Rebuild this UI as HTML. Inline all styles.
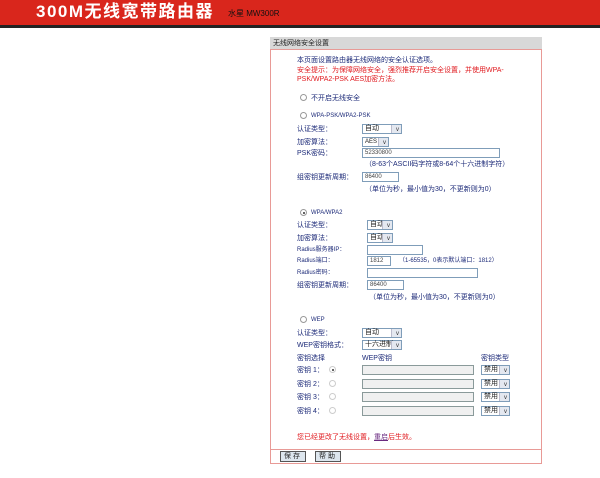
<!DOCTYPE html><html><head><meta charset="utf-8"><style>
*{margin:0;padding:0;box-sizing:border-box}
body{width:600px;height:478px;background:#fff;position:relative;overflow:hidden;font-family:"Liberation Sans","Noto Sans CJK SC",sans-serif;font-size:7px;color:#1c2a78}
.a{position:absolute;white-space:nowrap;line-height:9px}
.in{position:absolute;height:10px;border:1px solid #7f9db9;background:#fff;font-size:6px;line-height:8px;padding-left:2px;color:#444}
.in.g{background:#f0f0f0;border-color:#8a9a9a}
.sel{position:absolute;height:10px;border:1px solid #7f9db9;background:#fff;font-size:7px;line-height:8px;padding-left:2px;color:#222}
.sel:after{content:"";position:absolute;right:0;top:0;width:9px;height:8px;background:#e4e8f0;border-left:1px solid #bbc}
.sel i{position:absolute;right:2px;top:1px;font-style:normal;font-size:6px;z-index:1;color:#333}
.r{position:absolute;width:7px;height:7px;border:1px solid #999;border-radius:50%;background:#fff}
.r.on:after{content:"";position:absolute;left:1.5px;top:1.5px;width:2px;height:2px;border-radius:50%;background:#333}
.r.d{border-color:#ccc}
.red{color:#e0191e}
.btn{position:absolute;top:451px;width:26px;height:11px;border:1px solid #555;background:#dde6ee;font-size:7px;line-height:9px;text-align:center;color:#222;letter-spacing:2px}
</style></head><body>
<div style="position:absolute;left:0;top:0;width:600px;height:25px;background:#d9261c"></div>
<div style="position:absolute;left:0;top:25px;width:600px;height:3px;background:#222"></div>
<div class="a" style="left:36px;top:2px;font-size:17px;line-height:20px;color:#fff;font-weight:bold;letter-spacing:1.5px">300M无线宽带路由器</div>
<div class="a" style="left:228px;top:9px;font-size:8px;color:#111">水星 MW300R</div>

<div style="position:absolute;left:270px;top:37px;width:272px;height:427px;border:1px solid #e89a96;background:#fff"></div>
<div style="position:absolute;left:270px;top:37px;width:272px;height:13px;background:#d8d8d8;border-bottom:1px solid #e89a96"></div>
<div class="a" style="left:273px;top:39px;color:#222">无线网络安全设置</div>
<div style="position:absolute;left:271px;top:449px;width:270px;height:1px;background:#e89a96"></div>

<div class="a" style="left:297px;top:56px">本页面设置路由器无线网络的安全认证选项。</div>
<div class="a red" style="left:297px;top:66px">安全提示：为保障网络安全，强烈推荐开启安全设置，并使用WPA-</div>
<div class="a red" style="left:297px;top:75px">PSK/WPA2-PSK AES加密方法。</div>

<div class="r" style="left:300px;top:94px"></div><div class="a" style="left:311px;top:94px">不开启无线安全</div>
<div class="r" style="left:300px;top:112px"></div><div class="a" style="left:311px;top:112px;font-size:6px">WPA-PSK/WPA2-PSK</div>
<div class="a" style="left:297px;top:125px">认证类型：</div><div class="sel" style="left:362px;top:124px;width:40px">自动<i>v</i></div>
<div class="a" style="left:297px;top:138px">加密算法：</div><div class="sel" style="left:362px;top:137px;width:27px;font-size:6px">AES<i>v</i></div>
<div class="a" style="left:297px;top:149px">PSK密码：</div><div class="in" style="left:362px;top:148px;width:138px">52330800</div>
<div class="a" style="left:365px;top:160px">（8-63个ASCII码字符或8-64个十六进制字符）</div>
<div class="a" style="left:297px;top:173px">组密钥更新周期：</div><div class="in" style="left:362px;top:172px;width:37px">86400</div>
<div class="a" style="left:365px;top:185px">（单位为秒，最小值为30，不更新则为0）</div>

<div class="r on" style="left:300px;top:209px"></div><div class="a" style="left:311px;top:209px;font-size:6px">WPA/WPA2</div>
<div class="a" style="left:297px;top:221px">认证类型：</div><div class="sel" style="left:367px;top:220px;width:26px">自动<i>v</i></div>
<div class="a" style="left:297px;top:234px">加密算法：</div><div class="sel" style="left:367px;top:233px;width:26px">自动<i>v</i></div>
<div class="a" style="left:297px;top:246px;font-size:6px">Radius服务器IP：</div><div class="in" style="left:367px;top:245px;width:56px"></div>
<div class="a" style="left:297px;top:257px;font-size:6px">Radius端口：</div><div class="in" style="left:367px;top:256px;width:24px">1812</div>
<div class="a" style="left:399px;top:257px;font-size:6px">（1-65535，0表示默认端口：1812）</div>
<div class="a" style="left:297px;top:269px;font-size:6px">Radius密码：</div><div class="in" style="left:367px;top:268px;width:111px"></div>
<div class="a" style="left:297px;top:281px">组密钥更新周期：</div><div class="in" style="left:367px;top:280px;width:37px">86400</div>
<div class="a" style="left:369px;top:293px">（单位为秒，最小值为30，不更新则为0）</div>

<div class="r" style="left:300px;top:316px"></div><div class="a" style="left:311px;top:316px;font-size:6px">WEP</div>
<div class="a" style="left:297px;top:329px">认证类型：</div><div class="sel" style="left:362px;top:328px;width:40px">自动<i>v</i></div>
<div class="a" style="left:297px;top:341px">WEP密钥格式：</div><div class="sel" style="left:362px;top:340px;width:40px">十六进制<i>v</i></div>
<div class="a" style="left:297px;top:354px">密钥选择</div><div class="a" style="left:362px;top:354px">WEP密钥</div><div class="a" style="left:481px;top:354px">密钥类型</div>

<div class="a" style="left:297px;top:366px">密钥 1：</div><div class="r on d" style="left:329px;top:366px"></div><div class="in g" style="left:362px;top:365px;width:112px"></div><div class="sel" style="left:481px;top:365px;width:29px">禁用<i>v</i></div>
<div class="a" style="left:297px;top:380px">密钥 2：</div><div class="r d" style="left:329px;top:380px"></div><div class="in g" style="left:362px;top:379px;width:112px"></div><div class="sel" style="left:481px;top:379px;width:29px">禁用<i>v</i></div>
<div class="a" style="left:297px;top:393px">密钥 3：</div><div class="r d" style="left:329px;top:393px"></div><div class="in g" style="left:362px;top:392px;width:112px"></div><div class="sel" style="left:481px;top:392px;width:29px">禁用<i>v</i></div>
<div class="a" style="left:297px;top:407px">密钥 4：</div><div class="r d" style="left:329px;top:407px"></div><div class="in g" style="left:362px;top:406px;width:112px"></div><div class="sel" style="left:481px;top:406px;width:29px">禁用<i>v</i></div>

<div class="a red" style="left:297px;top:433px">您已经更改了无线设置，<span style="color:#6a2a80;text-decoration:underline">重启</span>后生效。</div>
<div class="btn" style="left:280px">保存</div>
<div class="btn" style="left:315px">帮助</div>
</body></html>
